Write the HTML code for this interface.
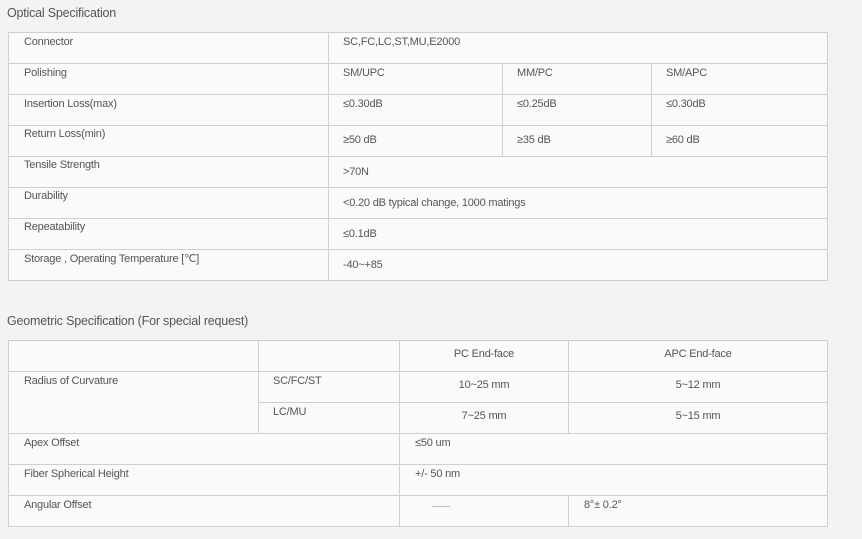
<!DOCTYPE html>
<html><head><meta charset="utf-8"><style>
html,body{margin:0;padding:0;background:#f3f3f3;width:862px;height:539px;overflow:hidden;position:relative;font-family:"Liberation Sans",sans-serif;color:#555;}
.b{position:absolute;box-sizing:border-box;border:1px solid #cfcfcf;background:#fafafa;}
.t{position:absolute;font-size:11px;line-height:14px;white-space:nowrap;letter-spacing:-0.2px;}
.c{text-align:center;}
.h{position:absolute;font-size:12.5px;line-height:16px;color:#555;white-space:nowrap;letter-spacing:-0.2px;}
</style></head><body>
<div class="h" style="left:7px;top:5px">Optical Specification</div>
<!-- table 1 -->
<div class="b" style="left:8px;top:32px;width:321px;height:32px"></div>
<div class="b" style="left:328px;top:32px;width:500px;height:32px"></div>
<div class="b" style="left:8px;top:63px;width:321px;height:32px"></div>
<div class="b" style="left:328px;top:63px;width:175px;height:32px"></div>
<div class="b" style="left:502px;top:63px;width:150px;height:32px"></div>
<div class="b" style="left:651px;top:63px;width:177px;height:32px"></div>
<div class="b" style="left:8px;top:94px;width:321px;height:32px"></div>
<div class="b" style="left:328px;top:94px;width:175px;height:32px"></div>
<div class="b" style="left:502px;top:94px;width:150px;height:32px"></div>
<div class="b" style="left:651px;top:94px;width:177px;height:32px"></div>
<div class="b" style="left:8px;top:125px;width:321px;height:32px"></div>
<div class="b" style="left:328px;top:125px;width:175px;height:32px"></div>
<div class="b" style="left:502px;top:125px;width:150px;height:32px"></div>
<div class="b" style="left:651px;top:125px;width:177px;height:32px"></div>
<div class="b" style="left:8px;top:156px;width:321px;height:32px"></div>
<div class="b" style="left:328px;top:156px;width:500px;height:32px"></div>
<div class="b" style="left:8px;top:187px;width:321px;height:32px"></div>
<div class="b" style="left:328px;top:187px;width:500px;height:32px"></div>
<div class="b" style="left:8px;top:218px;width:321px;height:32px"></div>
<div class="b" style="left:328px;top:218px;width:500px;height:32px"></div>
<div class="b" style="left:8px;top:249px;width:321px;height:32px"></div>
<div class="b" style="left:328px;top:249px;width:500px;height:32px"></div>

<div class="t" style="left:24px;top:35px">Connector</div>
<div class="t" style="left:343px;top:35px">SC,FC,LC,ST,MU,E2000</div>
<div class="t" style="left:24px;top:66px">Polishing</div>
<div class="t" style="left:343px;top:66px">SM/UPC</div>
<div class="t" style="left:517px;top:66px">MM/PC</div>
<div class="t" style="left:666px;top:66px">SM/APC</div>
<div class="t" style="left:24px;top:97px">Insertion Loss(max)</div>
<div class="t" style="left:343px;top:97px">≤0.30dB</div>
<div class="t" style="left:517px;top:97px">≤0.25dB</div>
<div class="t" style="left:666px;top:97px">≤0.30dB</div>
<div class="t" style="left:24px;top:127px">Return Loss(min)</div>
<div class="t" style="left:343px;top:133px">≥50 dB</div>
<div class="t" style="left:517px;top:133px">≥35 dB</div>
<div class="t" style="left:666px;top:133px">≥60 dB</div>
<div class="t" style="left:24px;top:158px">Tensile Strength</div>
<div class="t" style="left:343px;top:165px">&gt;70N</div>
<div class="t" style="left:24px;top:189px">Durability</div>
<div class="t" style="left:343px;top:196px">&lt;0.20 dB typical change, 1000 matings</div>
<div class="t" style="left:24px;top:220px">Repeatability</div>
<div class="t" style="left:343px;top:227px">≤0.1dB</div>
<div class="t" style="left:24px;top:252px">Storage , Operating Temperature [℃]</div>
<div class="t" style="left:343px;top:258px">-40~+85</div>

<div class="h" style="left:7px;top:313px">Geometric Specification (For special request)</div>
<!-- table 2 -->
<div class="b" style="left:8px;top:340px;width:251px;height:32px"></div>
<div class="b" style="left:258px;top:340px;width:142px;height:32px"></div>
<div class="b" style="left:399px;top:340px;width:170px;height:32px"></div>
<div class="b" style="left:568px;top:340px;width:260px;height:32px"></div>
<div class="b" style="left:8px;top:371px;width:251px;height:63px"></div>
<div class="b" style="left:258px;top:371px;width:142px;height:32px"></div>
<div class="b" style="left:399px;top:371px;width:170px;height:32px"></div>
<div class="b" style="left:568px;top:371px;width:260px;height:32px"></div>
<div class="b" style="left:258px;top:402px;width:142px;height:32px"></div>
<div class="b" style="left:399px;top:402px;width:170px;height:32px"></div>
<div class="b" style="left:568px;top:402px;width:260px;height:32px"></div>
<div class="b" style="left:8px;top:433px;width:392px;height:32px"></div>
<div class="b" style="left:399px;top:433px;width:429px;height:32px"></div>
<div class="b" style="left:8px;top:464px;width:392px;height:32px"></div>
<div class="b" style="left:399px;top:464px;width:429px;height:32px"></div>
<div class="b" style="left:8px;top:495px;width:392px;height:32px"></div>
<div class="b" style="left:399px;top:495px;width:170px;height:32px"></div>
<div class="b" style="left:568px;top:495px;width:260px;height:32px"></div>

<div class="t c" style="left:399px;width:170px;top:347px">PC End-face</div>
<div class="t c" style="left:568px;width:260px;top:347px">APC End-face</div>
<div class="t" style="left:24px;top:374px">Radius of Curvature</div>
<div class="t" style="left:273px;top:374px">SC/FC/ST</div>
<div class="t c" style="left:399px;width:170px;top:378px">10~25 mm</div>
<div class="t c" style="left:568px;width:260px;top:378px">5~12 mm</div>
<div class="t" style="left:273px;top:405px">LC/MU</div>
<div class="t c" style="left:399px;width:170px;top:409px">7~25 mm</div>
<div class="t c" style="left:568px;width:260px;top:409px">5~15 mm</div>
<div class="t" style="left:24px;top:436px">Apex Offset</div>
<div class="t" style="left:415px;top:436px">≤50 um</div>
<div class="t" style="left:24px;top:467px">Fiber Spherical Height</div>
<div class="t" style="left:415px;top:467px">+/- 50 nm</div>
<div class="t" style="left:24px;top:498px">Angular Offset</div>
<div style="position:absolute;left:432px;top:506px;width:18px;height:1px;background:#bbb"></div>
<div class="t" style="left:584px;top:498px">8°± 0.2°</div>
</body></html>
